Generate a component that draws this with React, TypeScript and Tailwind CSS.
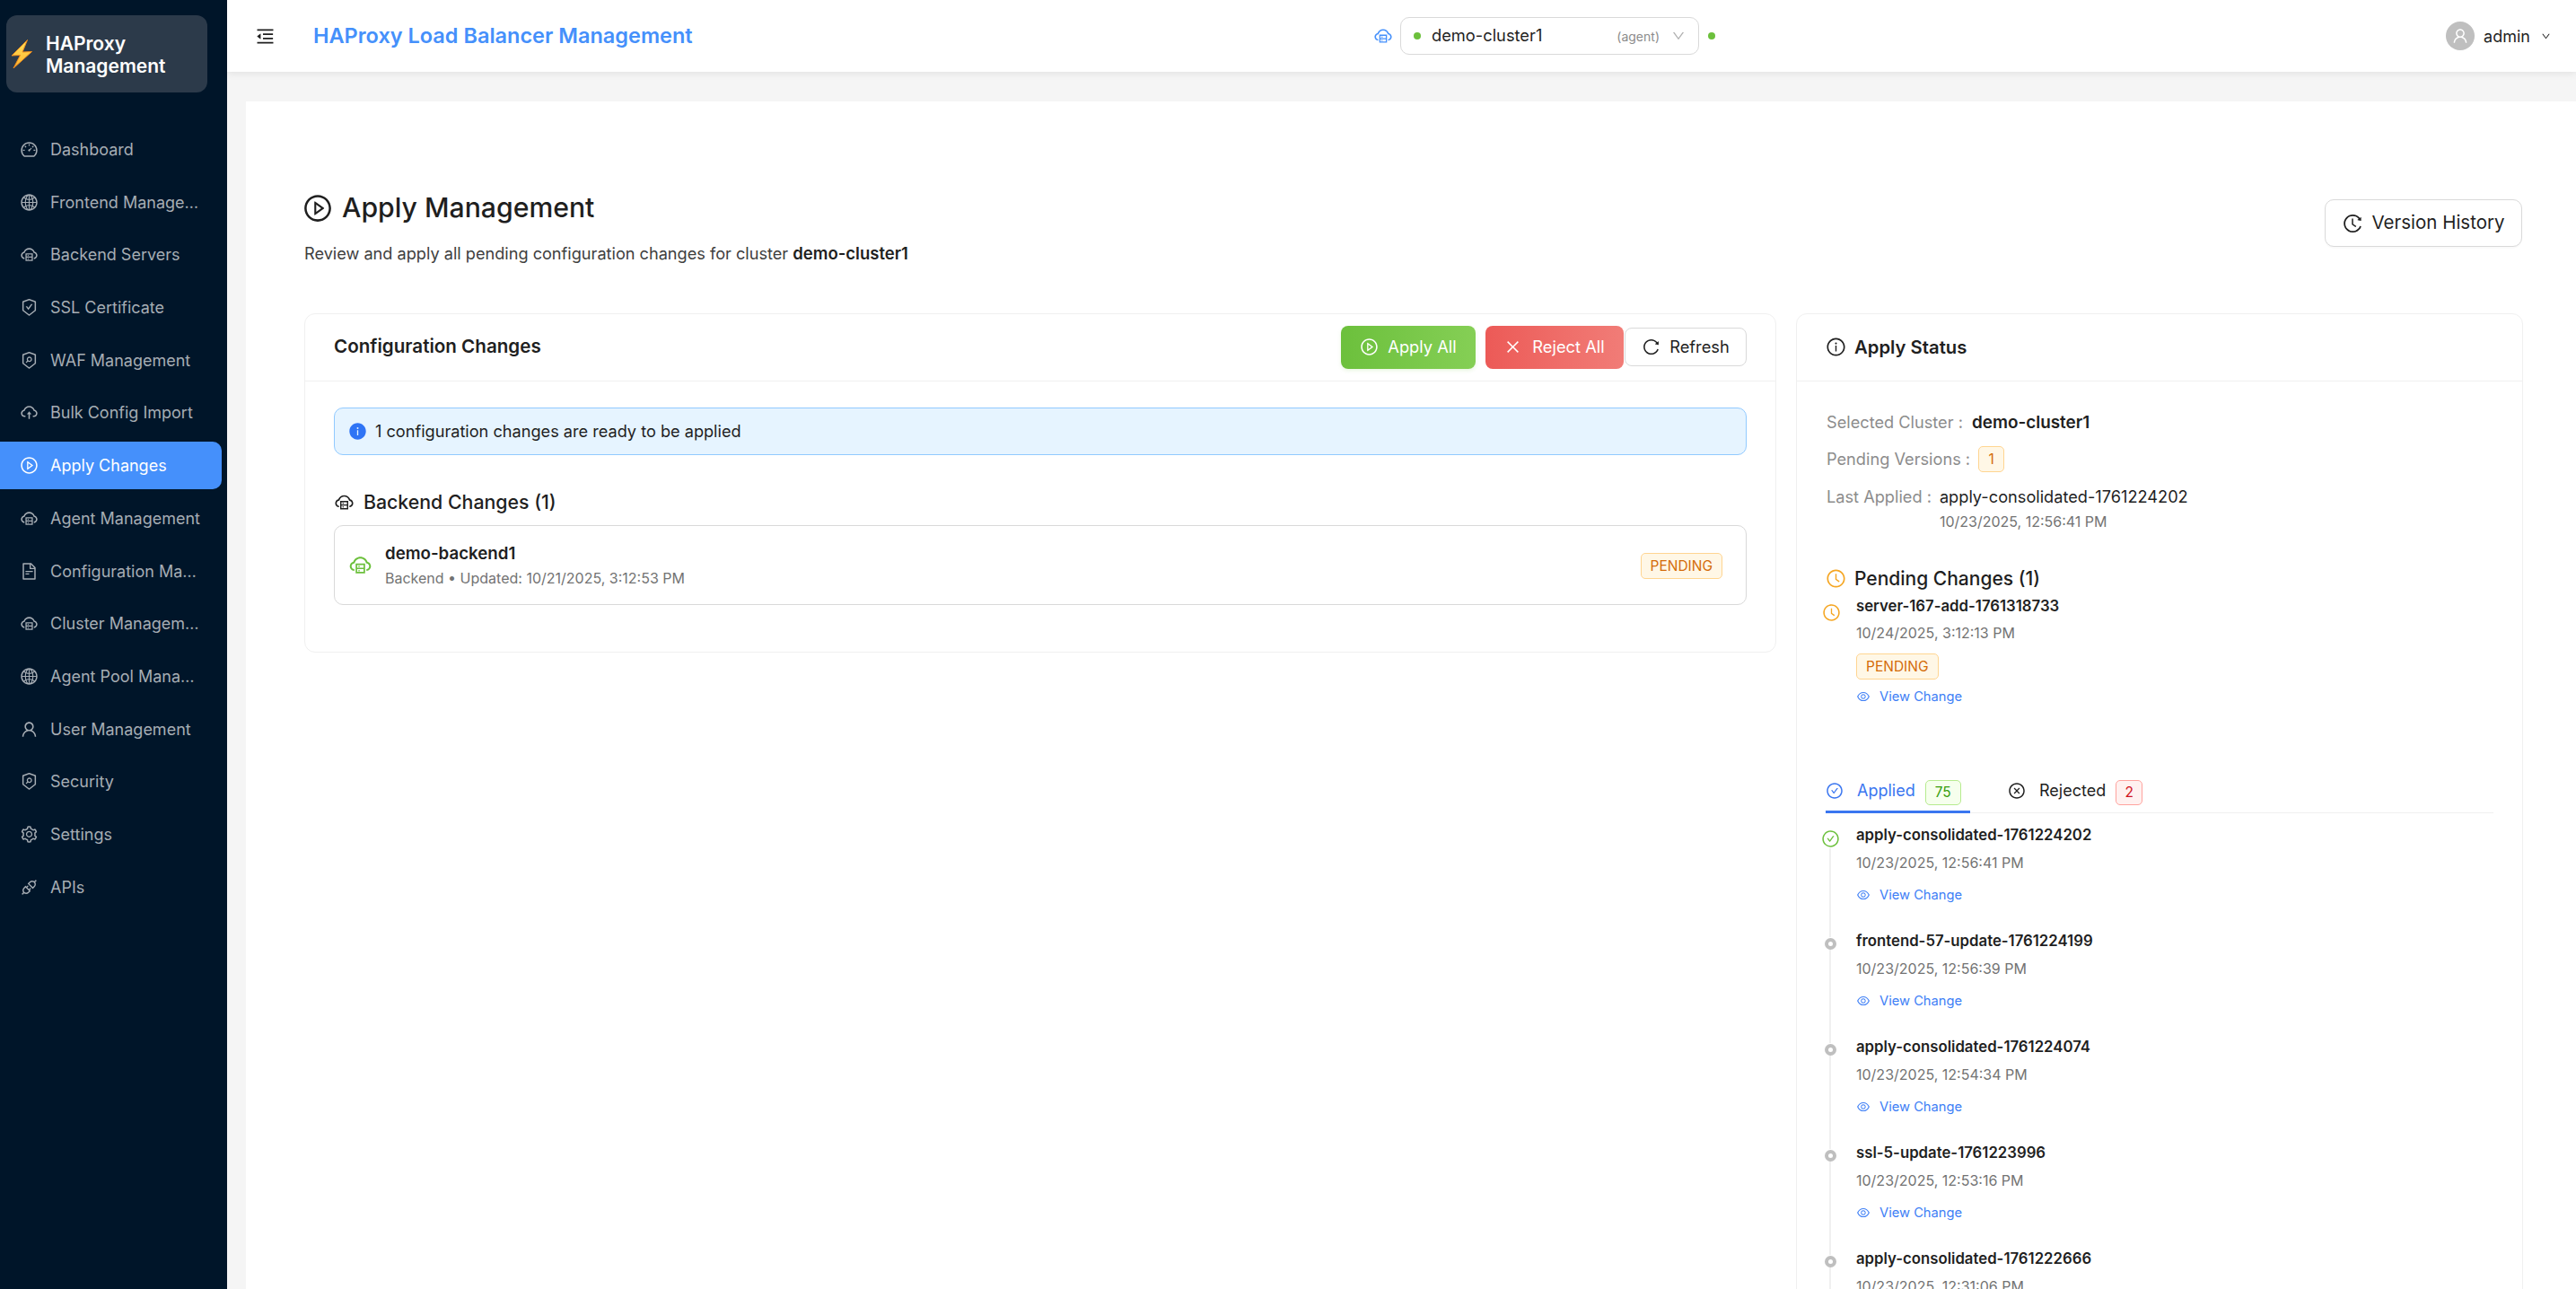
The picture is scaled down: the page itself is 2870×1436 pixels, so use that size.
import type { ReactNode } from "react";
import {
  AiOutlineApi,
  AiOutlineCheckCircle,
  AiOutlineClockCircle,
  AiOutlineClose,
  AiOutlineCloseCircle,
  AiOutlineCloudServer,
  AiOutlineCloudUpload,
  AiOutlineDashboard,
  AiOutlineDown,
  AiOutlineEye,
  AiOutlineFileText,
  AiOutlineGlobal,
  AiOutlineHistory,
  AiOutlineInfoCircle,
  AiOutlineMenuFold,
  AiOutlinePlayCircle,
  AiOutlineReload,
  AiOutlineSafetyCertificate,
  AiOutlineSecurityScan,
  AiOutlineSetting,
  AiOutlineUser,
  AiFillInfoCircle,
} from "react-icons/ai";

const menu = [
  { label: "Dashboard", icon: AiOutlineDashboard },
  { label: "Frontend Management", icon: AiOutlineGlobal },
  { label: "Backend Servers", icon: AiOutlineCloudServer },
  { label: "SSL Certificate", icon: AiOutlineSafetyCertificate },
  { label: "WAF Management", icon: AiOutlineSecurityScan },
  { label: "Bulk Config Import", icon: AiOutlineCloudUpload },
  { label: "Apply Changes", icon: AiOutlinePlayCircle, active: true },
  { label: "Agent Management", icon: AiOutlineCloudServer },
  { label: "Configuration Management", icon: AiOutlineFileText },
  { label: "Cluster Management", icon: AiOutlineCloudServer },
  { label: "Agent Pool Management", icon: AiOutlineGlobal },
  { label: "User Management", icon: AiOutlineUser },
  { label: "Security", icon: AiOutlineSecurityScan },
  { label: "Settings", icon: AiOutlineSetting },
  { label: "APIs", icon: AiOutlineApi },
];

const history = [
  { name: "apply-consolidated-1761224202", date: "10/23/2025, 12:56:41 PM" },
  { name: "frontend-57-update-1761224199", date: "10/23/2025, 12:56:39 PM" },
  { name: "apply-consolidated-1761224074", date: "10/23/2025, 12:54:34 PM" },
  { name: "ssl-5-update-1761223996", date: "10/23/2025, 12:53:16 PM" },
  { name: "apply-consolidated-1761222666", date: "10/23/2025, 12:31:06 PM" },
];

function Sidebar() {
  return (
    <aside className="w-[253px] shrink-0 bg-[#001529] pt-[17px]">
      <div className="ml-[7px] flex h-[86px] w-[224px] items-center rounded-[12px] bg-[#2c3a4a] pl-[5px]">
        <svg viewBox="0 0 24 32" className="h-[32px] w-[24px] shrink-0">
          <defs>
            <linearGradient id="bolt" x1="0" y1="0" x2="0" y2="1">
              <stop offset="0" stopColor="#ffe15a" />
              <stop offset="1" stopColor="#ffb52e" />
            </linearGradient>
          </defs>
          <path d="M18.5 0.5 L1 18 L10.5 17.5 L3 32 L23.5 13.5 L13 14 Z" fill="url(#bolt)" stroke="#f08c1e" strokeWidth="1" />
        </svg>
        <div className="ml-[15px] pt-[2px] text-[21px] leading-[25px] font-semibold text-white">
          HAProxy
          <br />
          Management
        </div>
      </div>
      <nav className="mt-[37px] flex flex-col gap-[5.7px]">
        {menu.map((item) => (
          <div
            key={item.label}
            className={
              item.active
                ? "mr-[6px] flex h-[53px] items-center rounded-r-[10px] bg-[#4590fb] pl-[22px] text-white"
                : "mr-[6px] flex h-[53px] items-center pl-[22px] text-[#a6adb4]"
            }
          >
            <item.icon className="shrink-0 text-[21px]" />
            <span className="ml-[13px] w-[167px] truncate text-[18px]">{item.label}</span>
          </div>
        ))}
      </nav>
    </aside>
  );
}

function TopBar() {
  return (
    <header className="relative z-10 flex h-[80px] shrink-0 items-center bg-white pr-[28px] shadow-[0_2px_8px_rgba(0,0,0,0.08)]">
      <AiOutlineMenuFold className="ml-[31px] text-[23px] text-[#1f1f1f]" />
      <h1 className="ml-[42px] w-[424px] text-[23.5px] font-semibold whitespace-nowrap text-[#4590fb]">
        HAProxy Load Balancer Management
      </h1>
      <AiOutlineCloudServer className="ml-[757px] text-[22px] text-[#4590fb]" />
      <div className="ml-[8px] flex h-[42px] w-[333px] items-center rounded-[10px] border border-[#d9d9d9] pr-[14px] pl-[14px]">
        <span className="h-[8px] w-[8px] rounded-full bg-[#6cc03c]" />
        <span className="ml-[12px] text-[18.3px] text-[#1f1f1f]">demo-cluster1</span>
        <span className="ml-auto text-[14px] text-[#8c8c8c]">(agent)</span>
        <AiOutlineDown className="ml-[13px] text-[16px] text-[#b0b0b0]" />
      </div>
      <span className="ml-[10px] h-[8px] w-[8px] rounded-full bg-[#6cc03c]" />
      <div className="ml-auto flex h-[32px] w-[32px] items-center justify-center rounded-full bg-[#bfbfbf]">
        <AiOutlineUser className="text-[20px] text-white" />
      </div>
      <span className="ml-[10px] text-[18px] text-[#1f1f1f]">admin</span>
      <AiOutlineDown className="ml-[12px] text-[11px] text-[#1f1f1f]" />
    </header>
  );
}

function PendingTag({ children }: { children: ReactNode }) {
  return (
    <span className="inline-flex h-[29px] items-center rounded-[5px] border border-[#ffd591] bg-[#fff7e6] px-[10px] text-[15.5px] text-[#d46b08]">
      {children}
    </span>
  );
}

function ViewChange() {
  return (
    <div className="flex items-center text-[14.7px] text-[#4080f6]">
      <AiOutlineEye className="text-[16px]" />
      <span className="ml-[10px]">View Change</span>
    </div>
  );
}

function ChangesCard() {
  return (
    <section className="rounded-[12px] border border-[#f0f0f0] bg-white">
      <div className="flex h-[75px] items-center border-b border-[#f0f0f0] pr-[32px] pl-[32px]">
        <h2 className="text-[20.6px] font-semibold text-[#1f1f1f]">Configuration Changes</h2>
        <button className="ml-auto flex h-[48px] w-[150px] items-center justify-center rounded-[8px] bg-gradient-to-r from-[#6cc03c] to-[#85cf55] text-[18.3px] text-white shadow-[0_2px_4px_rgba(108,192,60,0.15)]">
          <AiOutlinePlayCircle className="mr-[10px] text-[21px]" />
          Apply All
        </button>
        <button className="ml-[11px] flex h-[48px] w-[154px] items-center justify-center rounded-[8px] bg-gradient-to-r from-[#ec5a57] to-[#f17c77] text-[18.3px] text-white">
          <AiOutlineClose className="mr-[12px] text-[19px]" />
          Reject All
        </button>
        <button className="ml-[1px] flex h-[43px] w-[136px] items-center justify-center rounded-[8px] border border-[#d9d9d9] bg-white text-[18.3px] text-[#1f1f1f]">
          <AiOutlineReload className="mr-[10px] text-[21px]" />
          Refresh
        </button>
      </div>
      <div className="px-[32px] pt-[29px] pb-[52px]">
        <div className="flex h-[53px] items-center rounded-[10px] border border-[#91caff] bg-[#e6f4ff] pl-[15px] text-[18.15px] text-[#1f1f1f]">
          <AiFillInfoCircle className="text-[21px] text-[#2f74f5]" />
          <span className="ml-[9px]">1 configuration changes are ready to be applied</span>
        </div>
        <div className="mt-[37px] flex items-center text-[21.3px] font-medium text-[#1f1f1f]">
          <AiOutlineCloudServer className="text-[23px]" />
          <span className="ml-[10px]">Backend Changes (1)</span>
        </div>
        <div className="mt-[9px] flex h-[89px] items-center rounded-[10px] border border-[#d9d9d9] pr-[26px] pl-[15px]">
          <AiOutlineCloudServer className="text-[27px] text-[#6cc03c]" />
          <div className="ml-[14px]">
            <div className="text-[18.7px] font-semibold text-[#1f1f1f]">demo-backend1</div>
            <div className="mt-[1px] text-[16px] text-[#737373]">
              Backend • Updated: 10/21/2025, 3:12:53 PM
            </div>
          </div>
          <span className="ml-auto pt-[2px]">
            <PendingTag>PENDING</PendingTag>
          </span>
        </div>
      </div>
    </section>
  );
}

function StatusCard() {
  return (
    <section className="rounded-[12px] border border-[#f0f0f0] bg-white">
      <div className="flex h-[75px] items-center border-b border-[#f0f0f0] pl-[32px] text-[20.3px] font-semibold text-[#1f1f1f]">
        <AiOutlineInfoCircle className="text-[23px]" />
        <span className="ml-[9px]">Apply Status</span>
      </div>
      <div className="pt-[32px] pl-[32px]">
        <div className="ml-px flex h-[28px] items-center text-[18.2px] text-[#8c8c8c]">
          <span>Selected Cluster :</span>
          <span className="ml-[10px] text-[18.9px] font-semibold text-[#1f1f1f]">demo-cluster1</span>
        </div>
        <div className="mt-[13px] ml-px flex h-[28px] items-center text-[18.2px] text-[#8c8c8c]">
          <span>Pending Versions :</span>
          <span className="ml-[9px] flex h-[29px] w-[29px] items-center justify-center rounded-[5px] border border-[#ffd591] bg-[#fff7e6] text-[15.5px] text-[#d46b08]">
            1
          </span>
        </div>
        <div className="mt-[13px] ml-px flex text-[18.2px] text-[#8c8c8c]">
          <span className="leading-[28px]">Last Applied :</span>
          <div className="ml-[9px]">
            <div className="leading-[28px] text-[#1f1f1f]">apply-consolidated-1761224202</div>
            <div className="text-[16px] leading-[28px] text-[#737373]">10/23/2025, 12:56:41 PM</div>
          </div>
        </div>
        <div className="mt-[36px] flex h-[28px] items-center text-[21px] font-medium text-[#1f1f1f]">
          <AiOutlineClockCircle className="text-[23px] text-[#f5a623]" />
          <span className="ml-[9px]">Pending Changes (1)</span>
        </div>
        <div className="mt-[4px] flex">
          <AiOutlineClockCircle className="mt-[9px] -ml-[4px] text-[21px] text-[#f5a623]" />
          <div className="ml-[17px]">
            <div className="text-[16.75px] leading-[24px] font-semibold text-[#1f1f1f]">server-167-add-1761318733</div>
            <div className="mt-[6px] text-[16px] leading-[24px] text-[#737373]">10/24/2025, 3:12:13 PM</div>
            <div className="mt-[11px] flex">
              <PendingTag>PENDING</PendingTag>
            </div>
            <div className="mt-[8px]">
              <ViewChange />
            </div>
          </div>
        </div>
        <div className="mt-[82px] mr-[32px] flex h-[37px] items-start border-b border-[#f0f0f0]">
          <div className="-mb-px flex h-[37px] w-[161px] items-start border-b-[3px] border-[#3a76f0] text-[18px] text-[#3a76f0]">
            <AiOutlineCheckCircle className="mt-[2px] text-[20px]" />
            <span className="ml-[15px] leading-[24px]">Applied</span>
            <span className="ml-[11px] flex h-[28px] w-[40px] items-center justify-center rounded-[5px] border border-[#b7eb8f] bg-[#f6ffed] text-[15.5px] text-[#389e0d]">
              75
            </span>
          </div>
          <div className="ml-[42px] flex items-start text-[18px] text-[#1f1f1f]">
            <AiOutlineCloseCircle className="mt-[2px] text-[20px]" />
            <span className="ml-[15px] leading-[24px]">Rejected</span>
            <span className="ml-[11px] flex h-[28px] w-[30px] items-center justify-center rounded-[5px] border border-[#ffa39e] bg-[#fff1f0] text-[15.5px] text-[#cf1322]">
              2
            </span>
          </div>
        </div>
        <div className="mt-[12px]">
          {history.map((item, i) => (
            <div key={item.name} className="relative h-[118px] pl-[34px]">
              <span className="absolute top-[20px] bottom-[-8px] left-[4px] w-[2px] bg-[#f0f0f0]" />
              {i === 0 ? (
                <AiOutlineCheckCircle className="absolute top-[6px] -left-[5px] bg-white text-[21px] text-[#6cc03c]" />
              ) : (
                <span className="absolute top-[9px] -left-[1px] h-[13px] w-[13px] rounded-full border-[4px] border-[#bfbfbf] bg-white" />
              )}
              <div className="text-[16.75px] leading-[24px] font-semibold text-[#1f1f1f]">{item.name}</div>
              <div className="mt-[7px] text-[16px] leading-[24px] text-[#737373]">{item.date}</div>
              <div className="mt-[13px]">
                <ViewChange />
              </div>
            </div>
          ))}
        </div>
      </div>
    </section>
  );
}

export default function App() {
  return (
    <div className="flex h-screen overflow-hidden bg-[#f5f5f5] font-['Inter',sans-serif]">
      <Sidebar />
      <div className="flex min-w-0 flex-1 flex-col">
        <TopBar />
        <main className="flex-1 overflow-hidden pt-[33px] pl-[21px]">
          <div className="h-full bg-white pt-[101px] pr-[60px] pl-[65px]">
            <div className="flex items-start justify-between">
              <div>
                <div className="flex h-[36px] items-center">
                  <AiOutlinePlayCircle className="-ml-[2px] text-[34px] text-[#1f1f1f]" />
                  <h1 className="ml-[10px] text-[30.2px] font-medium text-[#1f1f1f]">Apply Management</h1>
                </div>
                <p className="mt-[19px] text-[18.15px] text-[#404040]">
                  Review and apply all pending configuration changes for cluster{" "}
                  <strong className="text-[18.5px] font-semibold text-[#1f1f1f]">demo-cluster1</strong>
                </p>
              </div>
              <button className="mt-[8px] flex h-[53px] w-[220px] items-center justify-center rounded-[10px] border border-[#d9d9d9] bg-white text-[20.5px] text-[#1f1f1f] shadow-[0_2px_0_rgba(0,0,0,0.02)]">
                <AiOutlineHistory className="mr-[9px] text-[24px]" />
                Version History
              </button>
            </div>
            <div className="mt-[52px] grid grid-cols-[1640px_810px] items-start gap-[22px]">
              <ChangesCard />
              <StatusCard />
            </div>
          </div>
        </main>
      </div>
    </div>
  );
}
